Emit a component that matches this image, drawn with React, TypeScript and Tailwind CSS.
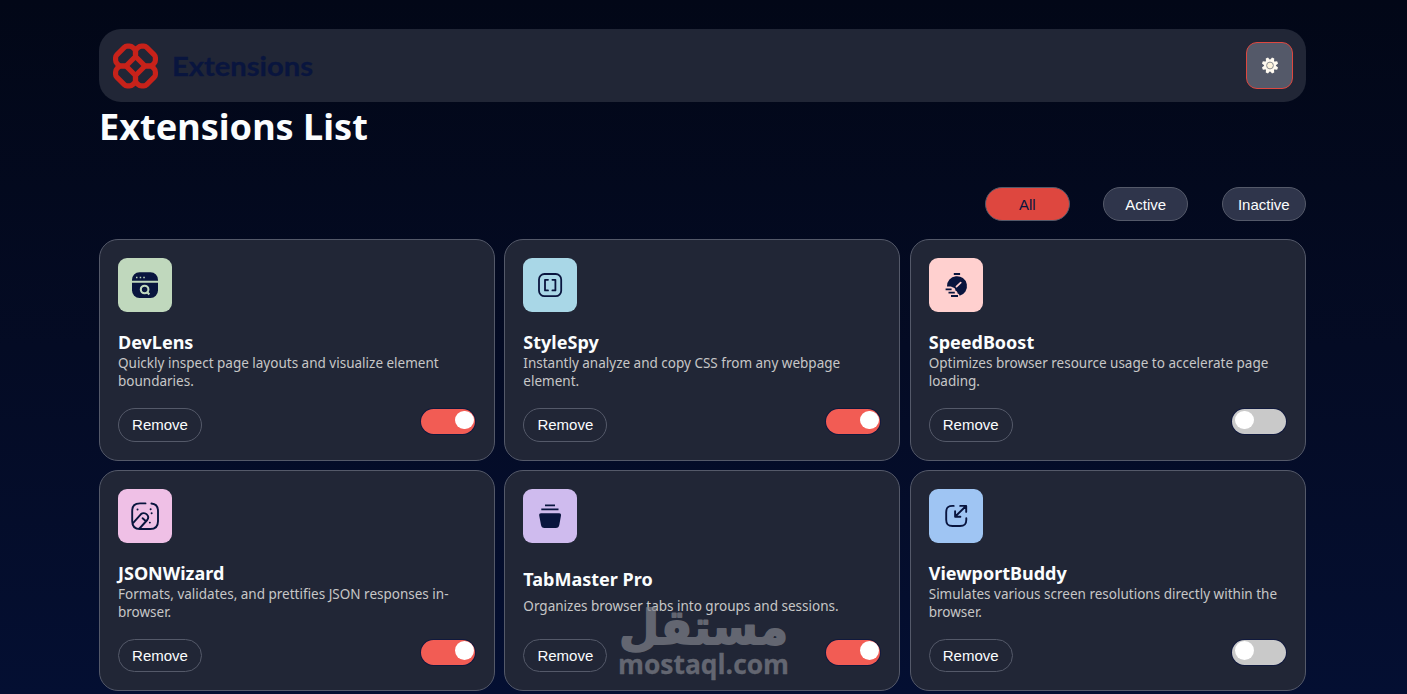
import { useState } from 'react'
import type { ReactNode } from 'react'

type Filter = 'All' | 'Active' | 'Inactive'

type Extension = {
  name: string
  description: string
  tile: string
  icon: ReactNode
  active: boolean
  short?: boolean
}

const NAVY = '#09153e'

const extensions: Extension[] = [
  {
    name: 'DevLens',
    description: 'Quickly inspect page layouts and visualize element boundaries.',
    tile: 'bg-[#c0d8bd]',
    active: true,
    icon: (
      <>
        <path d="M14 22.800v-.8a7.500 7.500 0 0 1 7.500-7.800h11a7.500 7.500 0 0 1 7.500 7.800v.8z" fill={NAVY} />
        <path d="M14 24.700h26v7.800a7.500 7.500 0 0 1-7.500 7.500h-11a7.500 7.500 0 0 1-7.500-7.500z" fill={NAVY} />
        <path d="M18 19.500h1.500M21.700 19.500h1.500M25.300 19.500h1.500" stroke="#c0d8bd" strokeWidth="1.700" />
        <circle cx="26.600" cy="31.500" r="3.800" fill="none" stroke="#c0d8bd" strokeWidth="2.100" />
        <path d="m28.800 33.600 2.500 2.900" stroke="#c0d8bd" strokeWidth="2.200" />
      </>
    ),
  },
  {
    name: 'StyleSpy',
    description: 'Instantly analyze and copy CSS from any webpage element.',
    tile: 'bg-[#a9d7e7]',
    active: true,
    icon: (
      <g fill="none" stroke={NAVY} strokeWidth="1.800" strokeLinecap="round" strokeLinejoin="round">
        <rect x="16" y="16" width="22.200" height="22.200" rx="5.500" />
        <path d="M25 21.800h-3v10.600h3M29.400 21.800h3v10.600h-3" />
      </g>
    ),
  },
  {
    name: 'SpeedBoost',
    description: 'Optimizes browser resource usage to accelerate page loading.',
    tile: 'bg-[#ffd0cf]',
    active: false,
    icon: (
      <>
        <path d="M24.800 16h6.300" stroke={NAVY} strokeWidth="1.900" />
        <path d="M18 28.500a10 10 0 1 1 12.600 9.300c-.3-1.700-1-2.200-2-2.400-.1-1.900-1-2.700-2.100-2.700-.2-2.400-1.200-3-2.500-3.300-1-.9-3-.9-6-.9z" fill={NAVY} />
        <path d="m27.500 28.600 4.200-3.900" stroke="#ffd0cf" strokeWidth="1.800" strokeLinecap="round" />
        <path d="M16.600 31.400h6M19.500 34.600h6.300M22 38h7" stroke={NAVY} strokeWidth="1.900" />
      </>
    ),
  },
  {
    name: 'JSONWizard',
    description: 'Formats, validates, and prettifies JSON responses in-browser.',
    tile: 'bg-[#efc0e6]',
    active: true,
    icon: (
      <g fill="none" stroke={NAVY} strokeWidth="1.900" strokeLinecap="round" strokeLinejoin="round">
        <path d="M27.500 14.400h-5.500c-5.500 0-7.800 2.300-7.800 7.800v10c0 5.500 2.300 7.800 7.800 7.800h10.200c5.500 0 7.800-2.300 7.800-7.800v-10c0-5-2-7.400-6.600-7.700" />
        <path d="m15.200 33.800 7.600-8.500a4.200 4.200 0 0 1 6 .1 4.200 4.200 0 0 1 .4 5.600L21.500 39.500M24.600 29.200l2.600 2.300" />
        <path d="M19.500 20.500h.1M32.600 20.300h.1M33.600 24.200h.1M31.800 33.600h.1" />
      </g>
    ),
  },
  {
    name: 'TabMaster Pro',
    description: 'Organizes browser tabs into groups and sessions.',
    tile: 'bg-[#cfbbee]',
    active: true,
    short: true,
    icon: (
      <>
        <path d="M22 16.400h10M18.300 20.400h17.200" stroke={NAVY} strokeWidth="1.700" />
        <path d="M18 24.300h18.200c1.300 0 2 .8 1.800 2.100l-1.700 9.500c-.4 2.100-1.400 3-3.500 3H21.500c-2.100 0-3.100-.9-3.500-3l-1.800-9.500c-.2-1.300.500-2.100 1.800-2.100z" fill={NAVY} />
      </>
    ),
  },
  {
    name: 'ViewportBuddy',
    description: 'Simulates various screen resolutions directly within the browser.',
    tile: 'bg-[#9fc5f3]',
    active: false,
    icon: (
      <g fill="none" stroke={NAVY} strokeWidth="1.900" strokeLinecap="round" strokeLinejoin="round" transform="translate(-.3 -.3)">
        <path d="M25 17.200h-1.200c-4.600 0-6.300 1.700-6.300 6.300v7.500c0 4.600 1.700 6.300 6.300 6.300h7.500c4.600 0 6.300-1.700 6.300-6.300v-1.500" />
        <path d="M37 17.600 26.800 27.600M31.500 17.200h6v6M26.400 22.600v5.400h5.300" />
      </g>
    ),
  },
]

const LOOP = 'M22.500 13 13 22.500H8.500Q6.500 22.500 5 21L3.800 19.700Q2.600 18.500 2.600 16.500V14Q2.600 12.500 3.800 11.300L11.300 3.800Q12.500 2.600 14 2.600H16.500Q18.500 2.600 19.700 3.800L21 5Q22.500 6.500 22.500 8.500z'

function Logo() {
  return (
    <svg width="201" height="46" viewBox="0 0 201 46" role="img" aria-label="Extensions">
      <g fill="none" stroke="#c7221a" strokeWidth="5.200" strokeLinejoin="round" transform="translate(0 .5)">
        <path d={LOOP} />
        <path d={LOOP} transform="matrix(-1 0 0 1 45 0)" />
        <path d={LOOP} transform="matrix(1 0 0 -1 0 45)" />
        <path d={LOOP} transform="matrix(-1 0 0 -1 45 45)" />
      </g>
      <text x="59" y="32.500" fill="#09153e" stroke="#09153e" strokeWidth=".3" className="font-['Lato'] text-[26px] font-bold" textLength="141" lengthAdjust="spacingAndGlyphs">Extensions</text>
    </svg>
  )
}

function SunIcon() {
  return (
    <svg width="17" height="17" viewBox="-8.5 -8.5 17 17" className="translate-x-[0.500px]">
      <g fill="#fffaf0">
        {[0, 45, 90, 135, 180, 225, 270, 315].map((angle) => (
          <path key={angle} d="M-2.500-4-1.200-8.200 1.200-8.200 2.500-4z" transform={`rotate(${angle + 22.5})`} />
        ))}
        <circle r="5.800" />
      </g>
      <circle r="3.400" fill="#fdf3dc" stroke="#8a8c90" strokeWidth="1" />
    </svg>
  )
}

function Toggle({ checked, onChange }: { checked: boolean; onChange: () => void }) {
  return (
    <button
      role="switch"
      aria-checked={checked}
      onClick={onChange}
      className={`mr-px mt-px flex h-[25px] w-[54px] rounded-full pt-[1.500px] ring-1 ring-[#0a1440]/70 ${checked ? 'justify-end bg-[#f25c54] pr-[1.500px]' : 'justify-start bg-[#c9c9c9] pl-[3.500px]'}`}
    >
      <span className="size-[18.500px] rounded-full bg-white" />
    </button>
  )
}

function Watermark() {
  return (
    <svg width="172" height="84" viewBox="0 0 172 84" className="pointer-events-none absolute left-[617px] top-[600px] overflow-visible opacity-70">
      <g fill="#80828a" stroke="#80828a" strokeLinejoin="round">
        <text x="171" y="44" direction="rtl" strokeWidth="1.800" className="font-['DejaVu_Sans'] text-[48px] font-bold" textLength="169" lengthAdjust="spacingAndGlyphs">مستقل</text>
        <text x="1" y="74" strokeWidth=".3" className="font-['Open_Sans'] text-[26px] font-bold" textLength="171" lengthAdjust="spacingAndGlyphs">mostaql.com</text>
      </g>
    </svg>
  )
}

export default function App() {
  const [items, setItems] = useState(extensions)
  const [filter, setFilter] = useState<Filter>('All')

  const visible = items.filter((item) => filter === 'All' || item.active === (filter === 'Active'))

  const toggle = (name: string) => setItems(items.map((item) => (item.name === name ? { ...item, active: !item.active } : item)))
  const remove = (name: string) => setItems(items.filter((item) => item.name !== name))

  return (
    <div className="relative h-[694px] overflow-hidden bg-linear-to-b from-[#020717] via-[#040b24] to-[#040f32] font-['Noto_Sans',sans-serif] text-[#fbfdfe]">
      <div className="ml-[99px] w-[1206.800px] pt-[29px]">
        <header className="flex h-[73px] items-center justify-between rounded-[22px] bg-[#212636] pl-[14px] pr-[13px]">
          <Logo />
          <button aria-label="Toggle theme" className="grid size-[47px] place-items-center rounded-[11px] border border-[#de473f] bg-[#545969]">
            <SunIcon />
          </button>
        </header>

        <h1 className="text-[36.100px] font-bold leading-[49px]">Extensions List</h1>

        <div className="mt-9 flex justify-end gap-[33.500px] font-['Liberation_Sans',sans-serif] text-[15px]">
          {(['All', 'Active', 'Inactive'] as const).map((label) => (
            <button
              key={label}
              onClick={() => setFilter(label)}
              className={`h-[34px] rounded-full border border-[#545969] pt-[2px] ${label === 'Inactive' ? 'w-[84px]' : 'w-[85px]'} ${filter === label ? 'bg-[#de473f] text-[#09153e]' : 'bg-[#2f354b]'}`}
            >
              {label}
            </button>
          ))}
        </div>

        <div className="mt-[18.300px] grid grid-cols-3 gap-x-[9.300px] gap-y-[9.500px]">
          {visible.map((item) => (
            <article key={item.name} className="flex h-[221.250px] flex-col rounded-[19px] border border-[#545969] bg-[#212636] p-[18px]">
              <svg width="54" height="54" viewBox="0 0 54 54" className={`shrink-0 rounded-[9px] ${item.tile}`}>
                {item.icon}
              </svg>
              <h2 className={`text-[18px] font-bold leading-[24px] ${item.short ? 'mt-[24px]' : 'mt-[18px]'}`}>{item.name}</h2>
              <p className={`text-[13.500px] leading-[18px] text-[#c7c7c7] ${item.short ? 'mt-[6px]' : ''}`}>{item.description}</p>
              <div className="mt-auto flex items-start justify-between">
                <button onClick={() => remove(item.name)} className="h-[33.500px] w-[84px] rounded-full border border-[#545969] pt-px font-['Liberation_Sans',sans-serif] text-[15px]">Remove</button>
                <Toggle checked={item.active} onChange={() => toggle(item.name)} />
              </div>
            </article>
          ))}
        </div>
      </div>
      <Watermark />
    </div>
  )
}
